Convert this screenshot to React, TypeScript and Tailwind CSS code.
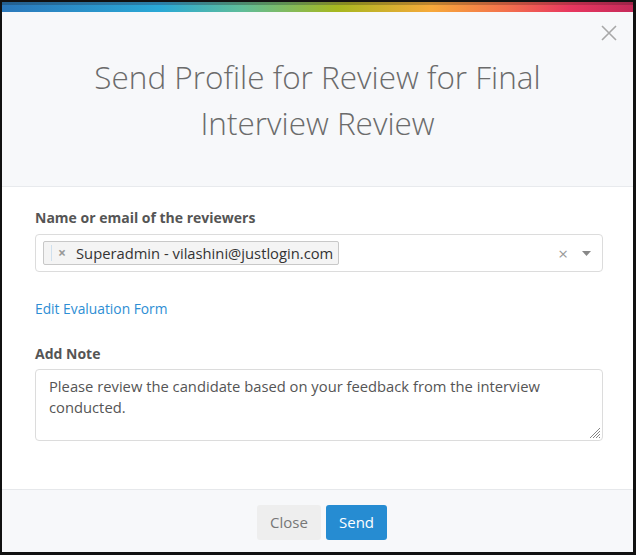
import React from "react";

export default function App() {
  return (
    <div className="flex h-[555px] w-[636px] flex-col border-b-[3px] border-l-2 border-r-[3px] border-t-2 border-[#111] bg-white font-['Open_Sans',sans-serif]">
      <div className="flex h-[10px] flex-col">
        <div className="h-[3px] bg-[linear-gradient(90deg,#245f8f_0%,#2a7fa8_25%,#5f8f52_45%,#8a8a20_55%,#c08530_68%,#c0503f_82%,#b82c4c_92%,#9e2449_100%)]" />
        <div className="flex-1 bg-[linear-gradient(90deg,#2b78bb_0%,#2aa9d6_25%,#5fbd9a_38%,#a6b81f_53%,#f7a93a_68%,#f3704d_80%,#e8375f_90%,#c62a5a_100%)]" />
      </div>
      <div className="relative h-[175px] border-b border-[#e8eaed] bg-[#f7f8fa] pt-[42px]">
        <svg
          className="absolute right-[16px] top-[13px]"
          width="16"
          height="16"
          viewBox="0 0 16 16"
        >
          <path d="M1 1 L15 15 M15 1 L1 15" stroke="#a8a8a8" strokeWidth="1.6" />
        </svg>
        <h1 className="text-center text-[31.5px] font-light leading-[46px] text-[#6b6b6b]">
          Send Profile for Review for Final
          <br />
          Interview Review
        </h1>
      </div>
      <div className="flex flex-1 flex-col pl-[33px] pr-[30px] pt-[21px]">
        <div className="text-[14px] font-bold leading-[20px] text-[#555]">
          Name or email of the reviewers
        </div>
        <div className="mt-[6px] flex h-[38px] items-center rounded-[4px] border border-[#dcdcdc] pl-[7px] pr-[11px]">
          <div className="flex h-[24px] items-center rounded-[2px] border border-[#c8c8c8] bg-[#f4f4f4] pl-[7px] pr-[5px]">
            <div className="h-[16px] w-px bg-[#cfe0ee]" />
            <span className="ml-[6px] text-[14px] font-bold leading-none text-[#999]">×</span>
            <span className="ml-[10px] text-[14.75px] leading-[22px] text-[#333]">
              Superadmin - vilashini@justlogin.com
            </span>
          </div>
          <div className="flex-1" />
          <span className="text-[17px] leading-none text-[#999]">×</span>
          <svg className="ml-[14px]" width="9" height="5" viewBox="0 0 9 5">
            <path d="M0 0 L9 0 L4.5 5 Z" fill="#888" />
          </svg>
        </div>
        <div className="mt-[27px] text-[13.8px] leading-[20px] text-[#2d8ed4]">
          Edit Evaluation Form
        </div>
        <div className="mt-[25px] text-[14px] font-bold leading-[20px] text-[#555]">
          Add Note
        </div>
        <div className="relative mt-[5px] h-[72px] rounded-[4px] border border-[#dcdcdc] pl-[13px] pr-[30px] pt-[6px] text-[14.75px] leading-[21px] text-[#555]">
          Please review the candidate based on your feedback from the interview conducted.
          <svg
            className="absolute bottom-[2px] right-[2px]"
            width="11"
            height="11"
            viewBox="0 0 11 11"
          >
            <path
              d="M11 1 L1 11 M11 4 L4 11 M11 7 L7 11 M11 10 L10 11"
              stroke="#777"
              strokeWidth="0.9"
            />
          </svg>
        </div>
      </div>
      <div className="flex h-[63px] justify-center gap-[5px] border-t border-[#e6e8eb] bg-[#f7f8fa] pl-[9px] pt-[15px]">
        <button className="h-[35px] w-[64px] rounded-[3px] bg-[#eeeeee] text-[15px] text-[#777]">
          Close
        </button>
        <button className="h-[35px] w-[61px] rounded-[3px] bg-[#268cd2] text-[15px] text-white">
          Send
        </button>
      </div>
    </div>
  );
}
